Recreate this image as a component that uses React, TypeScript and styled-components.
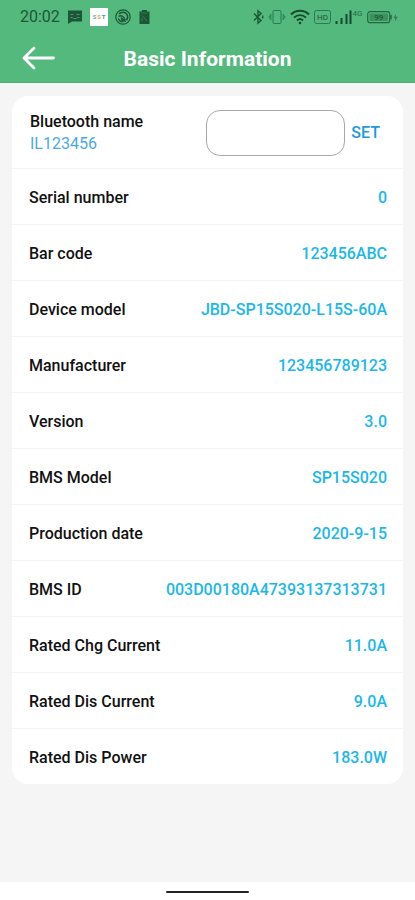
import React from "react";
import styled, { createGlobalStyle } from "styled-components";

const GlobalStyle = createGlobalStyle`
  *, *::before, *::after { box-sizing: border-box; }
  body {
    margin: 0;
    font-family: Roboto, "Liberation Sans", sans-serif;
    background: #ffffff;
    color: #111111;
  }
  button, input { font-family: inherit; }
`;

const Page = styled.div`
  display: flex;
  flex-direction: column;
  min-height: 100vh;
`;

const TopArea = styled.div`
  background: #53b97c;
  border-bottom: 1px solid #48ae72;
`;

const StatusBar = styled.div`
  display: flex;
  align-items: center;
  justify-content: space-between;
  height: 34px;
  padding: 0 17px 0 20px;
  color: #1d5637;
`;

const StatusGroup = styled.div<{ $gap: number }>`
  display: flex;
  align-items: center;
  gap: ${({ $gap }) => $gap}px;

  svg { display: block; flex: none; }
`;

const Clock = styled.time`
  font-size: 16px;
  line-height: 20px;
`;

const TitleBar = styled.header`
  display: grid;
  grid-template-columns: 56px 1fr 56px;
  align-items: center;
  height: 48px;
`;

const BackButton = styled.button`
  display: flex;
  align-items: center;
  justify-content: flex-end;
  height: 48px;
  padding: 0;
  border: 0;
  background: none;
  color: #ffffff;
  cursor: pointer;
`;

const Title = styled.h1`
  margin: 0;
  padding-top: 2px;
  color: #ffffff;
  font-size: 21px;
  font-weight: 700;
  line-height: 24px;
  text-align: center;
`;

const Content = styled.main`
  flex: 1;
  padding: 13px 12px;
  background: #f5f5f5;
`;

const Card = styled.section`
  background: #ffffff;
  border-radius: 16px;
`;

const NameForm = styled.form`
  display: flex;
  align-items: center;
  justify-content: space-between;
  height: 73px;
  padding: 2px 18px 0;
  border-bottom: 1px solid #f3f3f3;
`;

const NameLabel = styled.label`
  display: block;
  font-size: 16px;
  font-weight: 500;
  line-height: 22px;
`;

const CurrentName = styled.span`
  display: block;
  color: #4aa9e4;
  font-weight: 400;
`;

const NameControls = styled.div`
  display: flex;
  align-items: center;
  gap: 6px;
  padding-right: 5px;
`;

const NameInput = styled.input`
  width: 139px;
  height: 46px;
  padding: 0 12px;
  border: 1px solid #a8a8a8;
  border-radius: 14px;
  background: #ffffff;
  font-size: 16px;
`;

const SetButton = styled.button`
  padding: 0;
  border: 0;
  background: none;
  color: #2299dd;
  font-size: 16px;
  font-weight: 500;
  line-height: 22px;
  cursor: pointer;
`;

const InfoList = styled.dl`
  margin: 0;
`;

const InfoRow = styled.div`
  display: flex;
  align-items: center;
  justify-content: space-between;
  height: 56px;
  padding: 2px 16px 0 17px;
  border-bottom: 1px solid #f3f3f3;
  font-size: 16px;
  font-weight: 500;
  line-height: 22px;

  &:last-child {
    height: 55px;
    border-bottom: 0;
  }
`;

const InfoName = styled.dt``;

const InfoValue = styled.dd`
  margin: 0;
  color: #1cb7ea;
`;

const NavigationBar = styled.footer`
  display: flex;
  justify-content: center;
  height: 18px;
  padding-top: 9px;
  background: #ffffff;
`;

const HomeHandle = styled.div`
  width: 20%;
  height: 2px;
  border-radius: 1px;
  background: #222222;
`;

const ChatIcon = () => (
  <svg width="16" height="16" viewBox="0 0 16 16" aria-hidden="true">
    <path d="M1 1.5h14v11H5L1 15z" fill="currentColor" />
    <path d="M3.500 5.500h3M9.500 5.500h3M3.500 8.500h2l1 1h3l1-1h2" fill="none" stroke="#459c68" strokeWidth="1" />
  </svg>
);

const AppIcon = () => (
  <svg width="18" height="18" viewBox="0 0 18 18" role="img" aria-label="SST">
    <rect width="18" height="18" fill="#ffffff" />
    <g fontFamily="Roboto, sans-serif" fontSize="6" fontWeight="700" textAnchor="middle">
      <text x="4.500" y="11" fill="#78a6b1">S</text>
      <text x="9" y="11" fill="#dfa255">S</text>
      <text x="13.500" y="11" fill="#3a9a9b">T</text>
    </g>
  </svg>
);

const SwirlIcon = () => (
  <svg width="16" height="16" viewBox="0 0 16 16" fill="none" stroke="currentColor" aria-hidden="true">
    <circle cx="8" cy="8" r="7.2" strokeWidth="1.2" />
    <path d="M4 5C6 2.500 10 2.500 11.800 5.200c1.200 1.900 1 4.300-.3 6" strokeWidth="1.500" />
    <path d="M3.500 7.500C6 5.800 9 7 10 11" strokeWidth="1.500" />
    <path d="M3.300 9.500c.7 2 2.700 3.400 5 3.200" strokeWidth="1.200" />
    <path d="M6 8.500 11 12.500 7 11.500z" fill="currentColor" strokeWidth="1" />
  </svg>
);

const ClipboardIcon = () => (
  <svg width="13" height="16" viewBox="0 0 13 16" aria-hidden="true">
    <path d="M1.500 2.500H4V1h5v1.500h2.500V15h-10z" fill="currentColor" />
    <path d="M3.500 4h6M4 6.500l5 5.500M4 9v3" stroke="#3b8b5c" strokeWidth=".8" />
  </svg>
);

const BluetoothIcon = () => (
  <svg width="11" height="16" viewBox="0 0 11 16" fill="none" stroke="currentColor" strokeWidth="1.4" aria-hidden="true">
    <path d="m1 4.500 7 7-3 2.700V1.800l3 2.700-7 7" />
    <path d="M9.700 6.500v3" />
  </svg>
);

const VibrateIcon = () => (
  <svg width="18" height="16" viewBox="0 0 18 16" fill="none" stroke="#2d7950" aria-hidden="true">
    <rect x="5" y="1.500" width="8" height="13" rx="1" />
    <path d="M3 5v6L.8 8zM15 5v6l2.200-3z" fill="#3f9566" strokeWidth=".6" />
  </svg>
);

const WifiIcon = () => (
  <svg width="20" height="16" viewBox="0 0 20 16" fill="none" stroke="#154b2c" strokeWidth="1.9" aria-hidden="true">
    <path d="M1 5.500c5-5 13-5 18 0M4 8.700c3.400-3.400 8.600-3.400 12 0M7 11.500c1.800-1.700 4.200-1.700 6 0" />
    <circle cx="10" cy="14" r="1.3" fill="#154b2c" stroke="none" />
  </svg>
);

const HdIcon = () => (
  <svg width="17" height="14" viewBox="0 0 17 14" role="img" aria-label="HD">
    <rect x=".5" y=".5" width="16" height="13" rx="2" fill="none" stroke="#2d7950" />
    <text x="8.500" y="10" fill="currentColor" fontFamily="Roboto, sans-serif" fontSize="8" textAnchor="middle">HD</text>
  </svg>
);

const SignalIcon = () => (
  <svg width="28" height="16" viewBox="0 0 28 16" role="img" aria-label="4G">
    <path d="M1.500 12v3M6.500 9v6M11.500 5v10M15.500 1.500V15" stroke="#154b2c" strokeWidth="2" />
    <text x="17.500" y="7" fill="#256c43" fontFamily="Roboto, sans-serif" fontSize="8">4G</text>
  </svg>
);

const BatteryIcon = () => (
  <svg width="31" height="14" viewBox="0 0 31 14" role="img" aria-label="99">
    <rect x=".7" y="1.700" width="22" height="11" rx="2.500" fill="none" stroke="#25663f" strokeWidth="1.2" />
    <rect x="2.500" y="3.500" width="18.500" height="7.500" rx="1" fill="#3b925f" />
    <path d="M24 5v4.500" stroke="#25663f" strokeWidth="1.5" />
    <text x="11.700" y="10" fill="#154b2c" fontFamily="Roboto, sans-serif" fontSize="8" textAnchor="middle">99</text>
    <path d="m29 4-2.500 4H28v3.500l2.700-4.700H29z" fill="#47765a" />
  </svg>
);

const BackIcon = () => (
  <svg width="34" height="26" viewBox="0 0 34 26" fill="none" stroke="currentColor" strokeWidth="2.8" strokeLinecap="round" strokeLinejoin="round" aria-hidden="true">
    <path d="M31.500 13H2M12 3 2 13l10 10" />
  </svg>
);

const details = [
  { name: "Serial number", value: "0" },
  { name: "Bar code", value: "123456ABC" },
  { name: "Device model", value: "JBD-SP15S020-L15S-60A" },
  { name: "Manufacturer", value: "123456789123" },
  { name: "Version", value: "3.0" },
  { name: "BMS Model", value: "SP15S020" },
  { name: "Production date", value: "2020-9-15" },
  { name: "BMS ID", value: "003D00180A47393137313731" },
  { name: "Rated Chg Current", value: "11.0A" },
  { name: "Rated Dis Current", value: "9.0A" },
  { name: "Rated Dis Power", value: "183.0W" },
];

export default function App() {
  return (
    <>
      <GlobalStyle />
      <Page>
        <TopArea>
          <StatusBar>
            <StatusGroup $gap={7}>
              <Clock>20:02</Clock>
              <ChatIcon />
              <AppIcon />
              <SwirlIcon />
              <ClipboardIcon />
            </StatusGroup>
            <StatusGroup $gap={4}>
              <BluetoothIcon />
              <VibrateIcon />
              <WifiIcon />
              <HdIcon />
              <SignalIcon />
              <BatteryIcon />
            </StatusGroup>
          </StatusBar>
          <TitleBar>
            <BackButton type="button" aria-label="Back">
              <BackIcon />
            </BackButton>
            <Title>Basic Information</Title>
          </TitleBar>
        </TopArea>
        <Content>
          <Card>
            <NameForm onSubmit={(event) => event.preventDefault()}>
              <NameLabel htmlFor="bluetooth-name">
                Bluetooth name
                <CurrentName>IL123456</CurrentName>
              </NameLabel>
              <NameControls>
                <NameInput id="bluetooth-name" type="text" />
                <SetButton type="submit">SET</SetButton>
              </NameControls>
            </NameForm>
            <InfoList>
              {details.map(({ name, value }) => (
                <InfoRow key={name}>
                  <InfoName>{name}</InfoName>
                  <InfoValue>{value}</InfoValue>
                </InfoRow>
              ))}
            </InfoList>
          </Card>
        </Content>
        <NavigationBar>
          <HomeHandle />
        </NavigationBar>
      </Page>
    </>
  );
}
